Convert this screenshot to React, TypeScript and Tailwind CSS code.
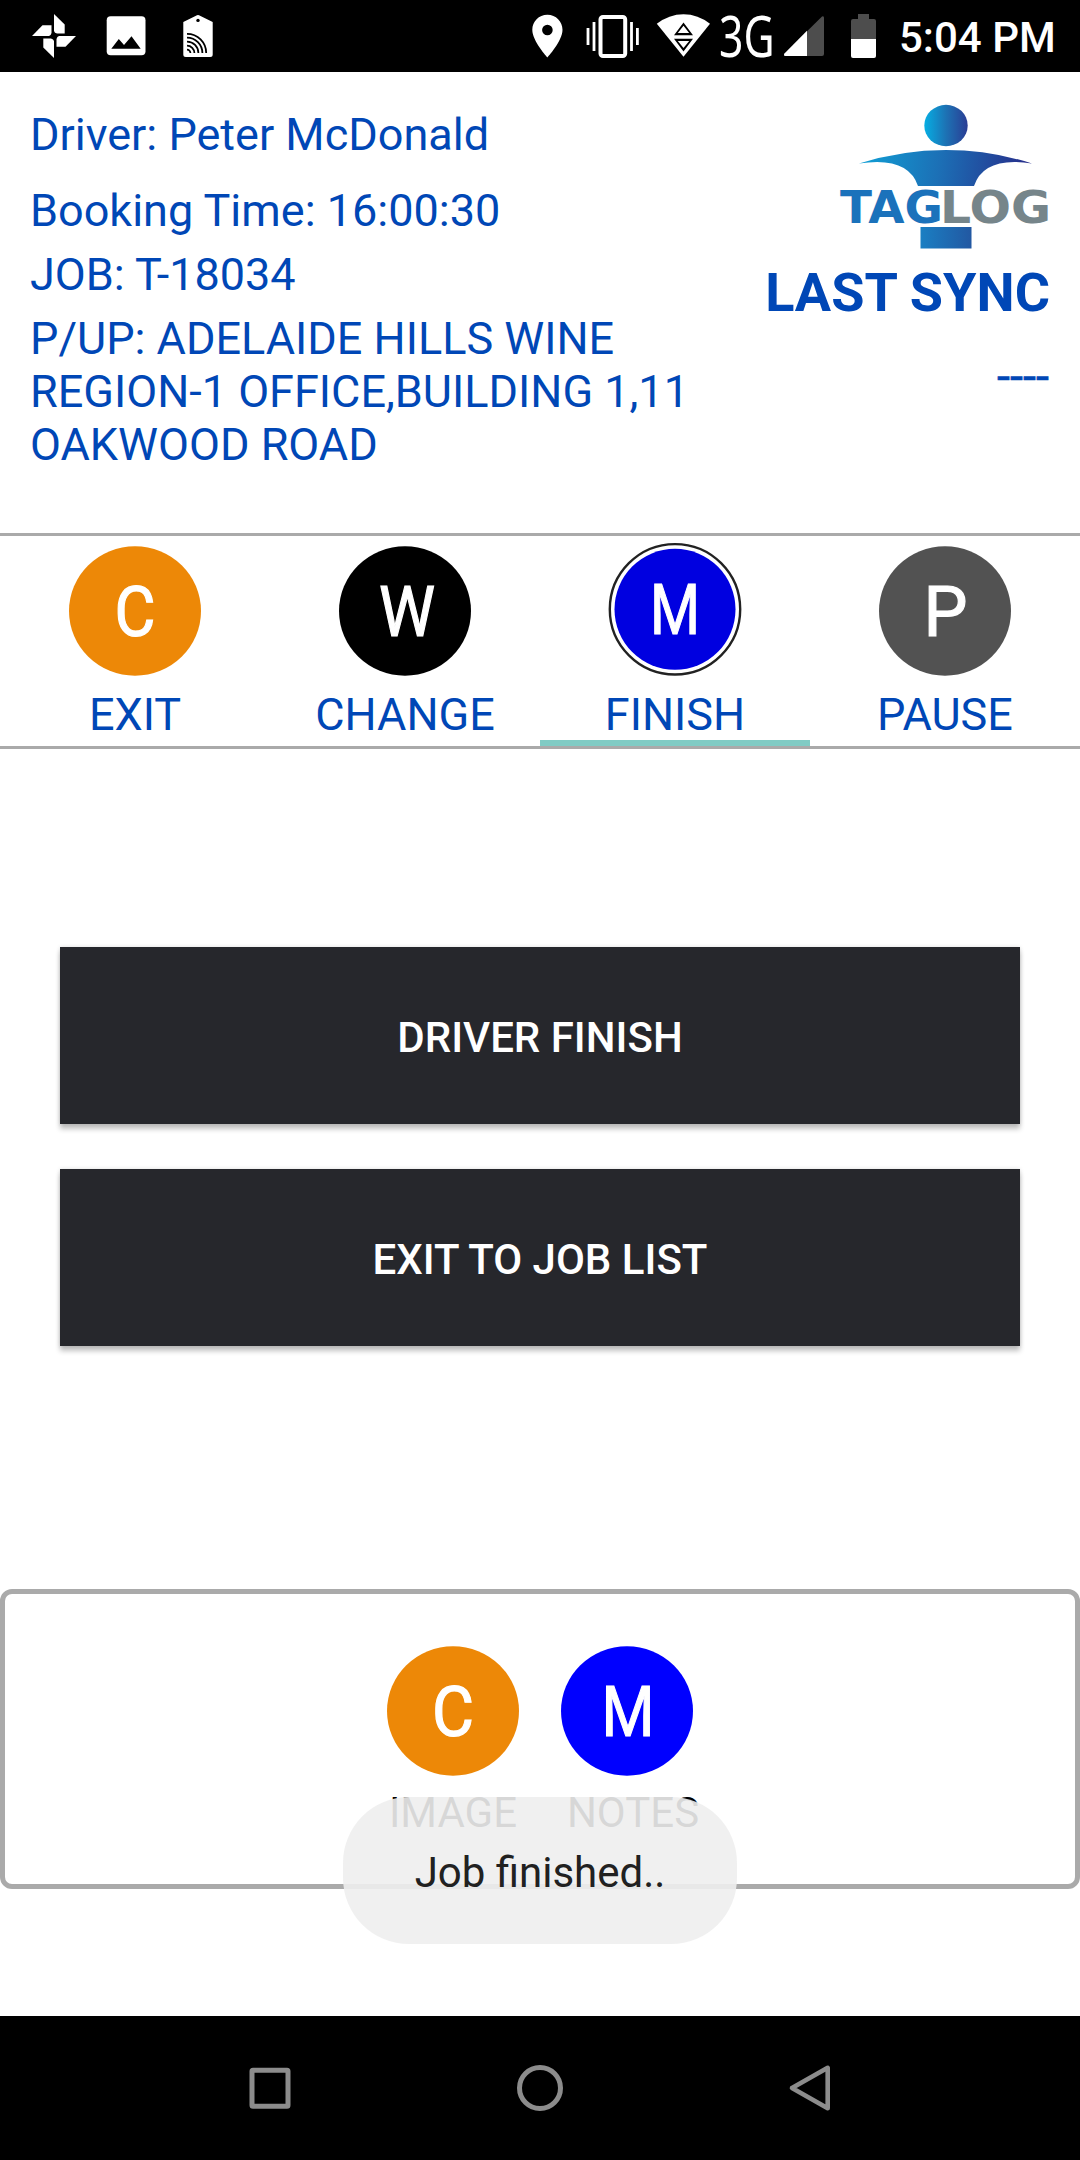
import React from 'react';

type GlyphProps = { x: number; w: number; className: string; children: React.ReactNode };

/* Status bar glyph, 72px tall, drawn in status bar coordinates. */
function Glyph({ x, w, className, children }: GlyphProps) {
  return (
    <svg width={w} height={72} viewBox={`${x} 0 ${w} 72`} fill="#fff" className={`block shrink-0 ${className}`}>
      {children}
    </svg>
  );
}

function StatusBar() {
  const blade = 'M54 14 L64.7 24.5 V33.5 H57 Q54.5 33 54 31 Z';
  return (
    <div className="flex h-[72px] w-full bg-black text-white">
      <Glyph x={32} w={45} className="ml-8">
        {[0, 90, 180, 270].map((a) => (
          <path key={a} d={blade} transform={`rotate(${a} 54 36)`} />
        ))}
      </Glyph>
      <Glyph x={106} w={40} className="ml-[29px]">
        <rect x="106.7" y="16.2" width="38.8" height="39" rx="4" />
        <path d="M111.3 48.7 L118.8 39 L124 45 L131.5 36.3 L140.7 48.7 Z" fill="#000" />
      </Glyph>
      <Glyph x={183} w={30} className="ml-[37px]">
        <path d="M183.3 22 L197 15.3 Q198 14.8 199 15.3 L212.7 22 V54.5 Q212.7 57 210.2 57 H185.8 Q183.3 57 183.3 54.5 Z" />
        <circle cx="198" cy="20.4" r="1.7" fill="#000" />
        {[3.4, 7.4, 11.4, 15.4, 19.2].map((r) => (
          <path key={r} d={`M187 ${53 - r} A${r} ${r} 0 0 1 ${187 + r} 53`} fill="none" stroke="#000" strokeWidth="1.8" />
        ))}
      </Glyph>
      <Glyph x={532} w={31} className="ml-[319px]">
        <path
          fillRule="evenodd"
          d="M547.4 14.8 C538.8 14.8 532.3 21.6 532.3 29.8 C532.3 41 547.4 57.5 547.4 57.5 C547.4 57.5 562.5 41 562.5 29.8 C562.5 21.6 556 14.8 547.4 14.8 Z M547.4 24.7 A5.3 5.3 0 1 1 547.4 35.3 A5.3 5.3 0 1 1 547.4 24.7 Z"
        />
      </Glyph>
      <Glyph x={586} w={54} className="ml-[23px]">
        <rect x="600.5" y="17" width="24.7" height="39" rx="2.5" fill="none" stroke="#fff" strokeWidth="4" />
        <path d="M594 22 V51 M588 28 V45 M631.5 22 V51 M637.4 28 V45" stroke="#fff" strokeWidth="2.8" />
      </Glyph>
      <Glyph x={656} w={55} className="ml-4">
        <path d="M656.8 23.8 Q669 14.2 683.5 14.2 Q698 14.2 710 23.8 L683.5 56.8 Z" />
        <path d="M683.5 22.5 L693 35.3 H674 Z M683.5 51.5 L693 38.7 H674 Z" fill="#000" />
        <path d="M683.5 25.8 L689.2 33 H677.8 Z M683.5 48 L689.2 41 H677.8 Z" />
      </Glyph>
      <Glyph x={715} w={64} className="ml-1 overflow-visible">
        <text x="719" y="57" fontFamily="'Noto Sans', sans-serif" fontSize="57" textLength="55.5" lengthAdjust="spacingAndGlyphs">
          3G
        </text>
      </Glyph>
      <Glyph x={783} w={42} className="ml-1">
        <path d="M822 16.5 Q824 15.5 824 18 V54 Q824 56 822 56 H785.5 Q783 55.5 784.5 53.5 Z" fill="#4d4d4d" />
        <path d="M807 30.8 V56 H785.5 Q783 55.5 784.5 53.5 Z" />
      </Glyph>
      <Glyph x={851} w={26} className="ml-[26px]">
        <path d="M858 14 H869 V19 H874 Q876 19 876 21 V39 H851 V21 Q851 19 853 19 H858 Z" fill="#4d4d4d" />
        <path d="M851 39 H876 V56 Q876 58 874 58 H853 Q851 58 851 56 Z" />
      </Glyph>
      <span className="ml-[22px] mt-[13px] whitespace-nowrap text-[42px] leading-[50px] font-medium">5:04 PM</span>
    </div>
  );
}

function Logo() {
  return (
    <svg width={210} height={146} viewBox="0 0 210 146" className="block overflow-visible">
      <defs>
        <linearGradient id="head" x1="0" x2="1">
          <stop offset="0" stopColor="#06aee3" />
          <stop offset="0.5" stopColor="#1d72b4" />
          <stop offset="1" stopColor="#2a3d94" />
        </linearGradient>
        <linearGradient id="arms" gradientUnits="userSpaceOnUse" x1="20" y1="0" x2="190" y2="20">
          <stop offset="0" stopColor="#0fa3d8" />
          <stop offset="0.5" stopColor="#1c70b6" />
          <stop offset="1" stopColor="#26308c" />
        </linearGradient>
        <linearGradient id="base" x1="0" x2="1">
          <stop offset="0" stopColor="#1a7fc3" />
          <stop offset="1" stopColor="#2258a2" />
        </linearGradient>
      </defs>
      <ellipse cx="106" cy="22.5" rx="21.7" ry="20.7" fill="url(#head)" />
      <path d="M19 60.5 Q62 47 106 47 Q150 47 192 60.5 Q144 53 134 83 H78 Q68 53 19 60.5 Z" fill="url(#arms)" />
      <g fontFamily="'DejaVu Sans', sans-serif" fontWeight="bold" fontSize="45">
        <text x="0" y="120" fill="#1b72bb" textLength="103" lengthAdjust="spacingAndGlyphs">TAG</text>
        <text x="100" y="120" fill="#76858a" textLength="111" lengthAdjust="spacingAndGlyphs">LOG</text>
      </g>
      <rect x="80.5" y="124" width="51" height="21.5" fill="url(#base)" />
    </svg>
  );
}

function Header() {
  return (
    <div className="flex h-[461px] justify-between px-[30px] text-[#0047b6]">
      <div className="flex w-[670px] flex-col pt-9 text-[45px] leading-[53px]">
        <p>Driver: Peter McDonald</p>
        <p className="mt-[23px]">Booking Time: 16:00:30</p>
        <p className="mt-[11px]">JOB: T-18034</p>
        <p className="mt-[11px]">P/UP: ADELAIDE HILLS WINE REGION-1 OFFICE,BUILDING 1,11 OAKWOOD ROAD</p>
      </div>
      <div className="flex flex-col items-end pt-[31px] whitespace-nowrap">
        <Logo />
        <p className="mt-3 text-[54px] leading-[63px] font-bold">LAST SYNC</p>
        <p className="mt-[25px] mr-px text-[47px] leading-[53px] [-webkit-text-stroke:0.6px_#0047b6]">----</p>
      </div>
    </div>
  );
}

type DiscProps = { letter: string; color: string; width: number; dx?: number; ringed?: boolean };

/* Round letter badge; width is the drawn advance of the letter. */
function Disc({ letter, color, width, dx = 0, ringed = false }: DiscProps) {
  return (
    <svg width={134} height={134} viewBox="0 0 134 134" className="block">
      {ringed ? (
        <>
          <ellipse cx="67" cy="67.3" rx="65.2" ry="65.2" fill="#fff" stroke="#222" strokeWidth="2.4" />
          <ellipse cx="67" cy="67.3" rx="60.5" ry="60.5" fill={color} />
        </>
      ) : (
        <ellipse cx="67" cy="69" rx="66" ry="64.7" fill={color} />
      )}
      <text
        x={67 - width / 2 + dx}
        y={ringed ? 92 : 94}
        fill="#fff"
        stroke="#fff"
        strokeWidth="1.2"
        fontFamily="Roboto, sans-serif"
        fontSize="71"
        textLength={width}
        lengthAdjust="spacingAndGlyphs"
      >
        {letter}
      </text>
    </svg>
  );
}

function Tab({ label, active = false, children }: { label: string; active?: boolean; children: React.ReactNode }) {
  return (
    <div className="relative flex flex-1 flex-col items-center pt-[6px]">
      {children}
      <span className="mt-[12px] text-[45px] leading-[53px] text-[#0047b6]">{label}</span>
      {active && <div className="absolute inset-x-0 bottom-0 h-[6px] bg-[#80cbc4]" />}
    </div>
  );
}

function ActionButton({ children }: { children: React.ReactNode }) {
  return (
    <button className="flex h-[177px] w-full items-center justify-center bg-[#26272c] pt-[3px] text-[42px] font-medium text-white shadow-[0_5px_5px_rgba(0,0,0,0.24),0_0_4px_rgba(0,0,0,0.14)]">
      {children}
    </button>
  );
}

function NavBar() {
  return (
    <div className="flex h-36 items-center justify-center gap-[222px] bg-black">
      <svg width={48} height={48} viewBox="0 0 48 48" fill="none" stroke="#8c8c8c" strokeWidth="5">
        <rect x="6" y="6.3" width="36" height="36" rx="1" />
      </svg>
      <svg width={48} height={48} viewBox="0 0 48 48" fill="none" stroke="#8c8c8c" strokeWidth="5">
        <circle cx="24" cy="24" r="20.5" />
      </svg>
      <svg width={48} height={48} viewBox="0 0 48 48" fill="none" stroke="#8c8c8c" strokeWidth="4.6" strokeLinejoin="round">
        <path d="M41.7 3.8 V44.2 L6 24 Z" />
      </svg>
    </div>
  );
}

export default function App() {
  return (
    <div className="flex h-[2160px] w-[1080px] flex-col overflow-hidden bg-white font-[Roboto,sans-serif]">
      <StatusBar />
      <Header />
      <div className="flex h-[216px] border-y-[3px] border-[#aaaaaa]">
        <Tab label="EXIT">
          <Disc letter="C" color="#ed8807" width={41} />
        </Tab>
        <Tab label="CHANGE">
          <Disc letter="W" color="#000000" width={56} dx={2} />
        </Tab>
        <Tab label="FINISH" active>
          <Disc letter="M" color="#0000e0" width={50} ringed />
        </Tab>
        <Tab label="PAUSE">
          <Disc letter="P" color="#525252" width={44} dx={0.5} />
        </Tab>
      </div>
      <div className="mt-[198px] flex flex-col gap-[45px] px-[60px]">
        <ActionButton>DRIVER FINISH</ActionButton>
        <ActionButton>EXIT TO JOB LIST</ActionButton>
      </div>
      <div className="relative mt-[243px] h-[300px] rounded-[12px] border-[5px] border-[#aaaaaa]">
        <div className="flex justify-center gap-10 pt-12 text-[42px] leading-[50px] text-black">
          <div className="flex w-[134px] flex-col items-center">
            <Disc letter="C" color="#ed8807" width={42} />
            <span className="mt-3">IMAGE</span>
          </div>
          <div className="flex w-[134px] flex-col items-center">
            <Disc letter="M" color="#0000ff" width={53} dx={1} />
            <span className="ml-[12px] mt-3">NOTES</span>
          </div>
        </div>
        <div className="absolute left-[338px] top-[203px] flex h-[147px] w-[394px] items-center justify-center rounded-[66px] bg-[#eeeeee]/90 pt-1 text-[42px] text-[#212121]">
          Job finished..
        </div>
      </div>
      <div className="mt-auto">
        <NavBar />
      </div>
    </div>
  );
}
